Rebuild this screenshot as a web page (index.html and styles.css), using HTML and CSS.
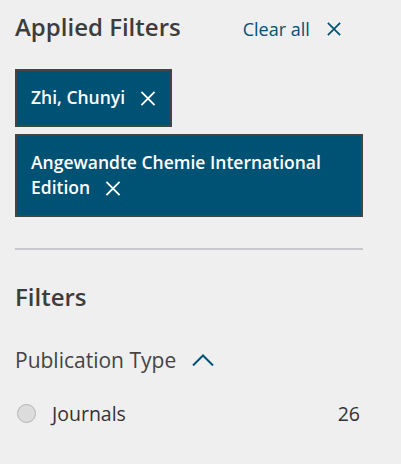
FILE: index.html
```html
<!DOCTYPE html>
<html lang="en">
<head>
<meta charset="utf-8">
<link rel="stylesheet" href="styles.css">
</head>
<body>
<aside class="sidebar">
  <div class="applied-head">
    <h2 class="title">Applied Filters</h2>
    <a class="clear-all" href="#">Clear all
      <svg class="x-icon" viewBox="0 0 16 16" width="16" height="16"><path d="M1 1L15 15M15 1L1 15" stroke="currentColor" stroke-width="2" fill="none"/></svg>
    </a>
  </div>
  <ul class="chips">
    <li class="chip"><span class="chip-text">Zhi, Chunyi<svg class="chip-x" viewBox="0 0 16 16" width="16" height="16"><path d="M1 1L15 15M15 1L1 15" stroke="currentColor" stroke-width="2" fill="none"/></svg></span></li>
    <li class="chip"><span class="chip-text">Angewandte Chemie International Edition<svg class="chip-x" viewBox="0 0 16 16" width="16" height="16"><path d="M1 1L15 15M15 1L1 15" stroke="currentColor" stroke-width="2" fill="none"/></svg></span></li>
  </ul>
  <hr class="divider">
  <h2 class="title filters-title">Filters</h2>
  <div class="facet-head">
    <span class="facet-name">Publication Type</span>
    <svg class="chevron" viewBox="0 0 22 12" width="22" height="12"><path d="M1 11.5L11 1.5L21 11.5" stroke="currentColor" stroke-width="2" fill="none"/></svg>
  </div>
  <label class="facet-item">
    <span class="radio"></span>
    <span class="item-label">Journals</span>
    <span class="item-count">26</span>
  </label>
</aside>
</body>
</html>
```

FILE: styles.css
```css
html, body {
  margin: 0;
  padding: 0;
  background: #efefef;
}
body {
  font-family: "Open Sans", "Noto Sans", sans-serif;
  color: #3d3d3d;
}
.sidebar {
  width: 348px;
  padding: 11px 0 0 15px;
}
.applied-head {
  display: flex;
  align-items: baseline;
  gap: 62px;
}
.title {
  margin: 0;
  font-size: 24px;
  font-weight: 600;
  line-height: 32px;
  color: #3d3d3d;
}
.clear-all {
  color: #005274;
  text-decoration: none;
  font-size: 18px;
  display: flex;
  align-items: center;
  gap: 16px;
}
.x-icon {
  width: 16px;
  height: 14px;
}
.chips {
  list-style: none;
  margin: 26px 0 0 0;
  padding: 0;
  display: flex;
  flex-direction: column;
  align-items: flex-start;
  gap: 7px;
}
.chip {
  background: #005274;
  border: 2px solid #444;
  padding: 14px 14px;
  color: #fff;
  font-size: 17.5px;
  font-weight: 600;
  line-height: 25.5px;
  max-width: 316px;
}
.chip-x {
  width: 16px;
  height: 15px;
  margin-left: 15px;
  vertical-align: -2px;
}
.divider {
  margin: 31px 0 0 0;
  border: 0;
  height: 2px;
  background: #c8c8cc;
}
.filters-title {
  margin-top: 31px;
}
.facet-head {
  display: flex;
  align-items: center;
  gap: 16px;
  margin-top: 33px;
}
.facet-name {
  font-size: 21px;
  line-height: 28px;
  color: #444;
}
.chevron {
  color: #005274;
}
.facet-item {
  display: flex;
  align-items: center;
  margin-top: 27px;
  font-size: 19.5px;
  line-height: 26px;
  padding-right: 3px;
}
.radio {
  width: 19px;
  height: 19px;
  border-radius: 50%;
  background: #dcdcdc;
  border: 1px solid #b4b4b4;
  margin-left: 2px;
  box-sizing: border-box;
}
.item-label {
  margin-left: 16px;
  color: #333;
}
.item-count {
  margin-left: auto;
  color: #333;
}
```
